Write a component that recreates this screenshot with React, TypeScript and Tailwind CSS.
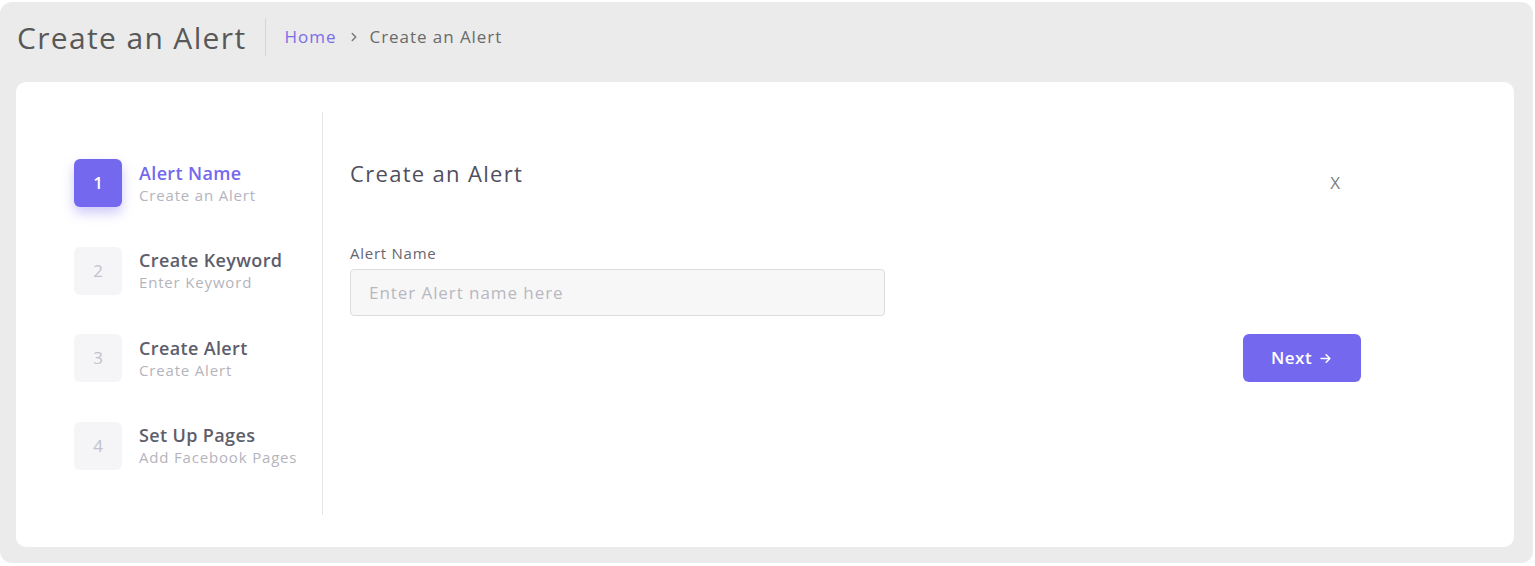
import React from "react";

type Step = { num: number; title: string; sub: string; active?: boolean };

const steps: Step[] = [
  { num: 1, title: "Alert Name", sub: "Create an Alert", active: true },
  { num: 2, title: "Create Keyword", sub: "Enter Keyword" },
  { num: 3, title: "Create Alert", sub: "Create Alert" },
  { num: 4, title: "Set Up Pages", sub: "Add Facebook Pages" },
];

const font = { fontFamily: '"Open Sans", "Liberation Sans", sans-serif' };

const StepItem: React.FC<{ step: Step }> = ({ step }) => (
  <div className="flex items-center h-[48px]">
    <div
      className={
        step.active
          ? "w-[48px] h-[48px] rounded-[6px] bg-[#7468ee] text-white flex items-center justify-center text-[17px] font-semibold shadow-[0_6px_12px_rgba(116,104,238,0.35)]"
          : "w-[48px] h-[48px] rounded-[6px] bg-[#f5f5f8] text-[#c2c2cb] flex items-center justify-center text-[17px]"
      }
    >
      {step.num}
    </div>
    <div className="ml-[17px] flex flex-col">
      <span
        className={
          step.active
            ? "text-[18px] leading-[22px] font-semibold tracking-[0.02em] text-[#7468ee]"
            : "text-[18px] leading-[22px] font-semibold tracking-[0.02em] text-[#5d5d6b]"
        }
      >
        {step.title}
      </span>
      <span className="text-[15px] leading-[20px] mt-[1px] tracking-[0.055em] text-[#b4b4bd]">{step.sub}</span>
    </div>
  </div>
);

export default function App() {
  return (
    <div className="w-full h-[566px] bg-white pt-[2px] pr-[2px]" style={font}>
      <div className="h-[561px] rounded-[12px] bg-[#ebebeb] pl-4 pr-[19px]">
        {/* page header */}
        <div className="h-[80px] pb-[10px] flex items-center">
          <h1 className="text-[30px] tracking-[0.045em] text-[#585858] pl-[1px]">Create an Alert</h1>
          <div className="ml-[19px] w-px h-[38px] bg-[#d6d6d6]" />
          <a className="ml-[18px] text-[17px] tracking-[0.06em] text-[#7a6ee6]">Home</a>
          <svg className="ml-[10px] w-[14px] h-[14px] text-[#777]" viewBox="0 0 24 24" fill="none" stroke="currentColor" strokeWidth="2.5" strokeLinecap="round" strokeLinejoin="round">
            <path d="M9 6l6 6-6 6" />
          </svg>
          <span className="ml-[9px] text-[17px] tracking-[0.055em] text-[#6a6a6a]">Create an Alert</span>
        </div>

        {/* wizard card */}
        <div className="h-[465px] bg-white rounded-[10px] pt-[30px] pb-[32px] flex">
          <div className="w-[307px] border-r border-[#e6e6ea] pl-[58px] pt-[47px] flex flex-col gap-[39.5px]">
            {steps.map((s) => (
              <StepItem key={s.num} step={s} />
            ))}
          </div>

          <div className="flex-1 pl-[27px] pr-[153px] pt-[47px]">
            <div className="flex justify-between items-start">
              <h2 className="text-[22px] leading-[28px] tracking-[0.06em] text-[#4f4f5e]">Create an Alert</h2>
              <button className="mt-[15px] mr-[21px] text-[17px] leading-[18px] text-[#808080]">X</button>
            </div>

            <div className="mt-[51px]">
              <label className="block text-[15px] leading-[20px] tracking-[0.05em] text-[#666670]">Alert Name</label>
              <input
                className="mt-[6px] w-[535px] h-[47px] rounded-[4px] border border-[#dcdcdf] bg-[#f7f7f8] px-[18px] text-[17px] tracking-[0.055em] text-[#555] placeholder:text-[#b8b8c0] outline-none"
                placeholder="Enter Alert name here"
                style={font}
              />
            </div>

            <div className="flex justify-end mt-[18px]">
              <button className="w-[118px] h-[48px] rounded-[6px] bg-[#7468ee] text-white text-[17px] font-semibold tracking-[0.03em] flex items-center justify-center gap-[6px]">
                Next
                <svg className="w-[15px] h-[15px]" viewBox="0 0 24 24" fill="none" stroke="currentColor" strokeWidth="2.5" strokeLinecap="round" strokeLinejoin="round">
                  <path d="M5 12h14M13 6l6 6-6 6" />
                </svg>
              </button>
            </div>
          </div>
        </div>
      </div>
    </div>
  );
}
